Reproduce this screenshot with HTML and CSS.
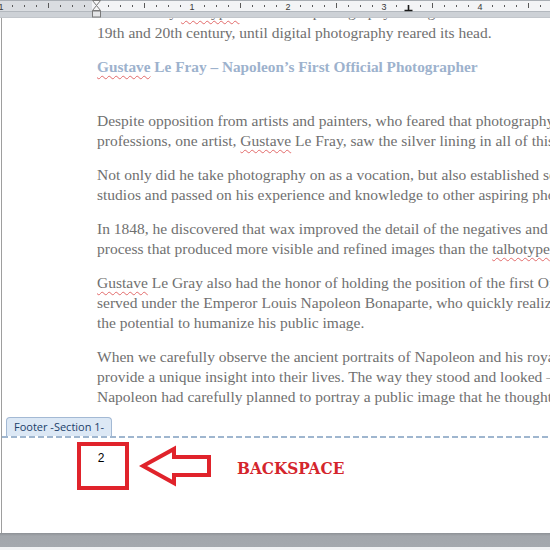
FILE: index.html
```html
<!DOCTYPE html>
<html>
<head>
<meta charset="utf-8">
<link rel="stylesheet" href="styles.css">
</head>
<body>
<div class="screen">
  <div class="ruler">
    <svg width="550" height="18" viewBox="0 0 550 18">
      <rect x="0" y="0" width="550" height="18" fill="#cdd1d6"/>
      <rect x="0" y="0" width="550" height="1" fill="#a9aeb4"/>
      <rect x="0" y="1" width="92" height="10" fill="#dadde1"/>
      <rect x="92" y="1" width="458" height="10" fill="#f3f4f6"/>
      <rect x="0" y="11" width="550" height="1" fill="#b3b8be"/>
      <rect x="0" y="17" width="550" height="1" fill="#c2c6cb"/>
      <g fill="#5a5a5a">
        <rect x="12" y="5" width="1" height="2"/><rect x="24" y="5" width="1" height="2"/><rect x="36" y="5" width="1" height="2"/>
        <rect x="48" y="3" width="1" height="5"/>
        <rect x="60" y="5" width="1" height="2"/><rect x="72" y="5" width="1" height="2"/><rect x="84" y="5" width="1" height="2"/>
        <rect x="108" y="5" width="1" height="2"/><rect x="120" y="5" width="1" height="2"/><rect x="132" y="5" width="1" height="2"/>
        <rect x="144" y="3" width="1" height="5"/>
        <rect x="156" y="5" width="1" height="2"/><rect x="168" y="5" width="1" height="2"/><rect x="180" y="5" width="1" height="2"/>
        <rect x="204" y="5" width="1" height="2"/><rect x="216" y="5" width="1" height="2"/><rect x="228" y="5" width="1" height="2"/>
        <rect x="240" y="3" width="1" height="5"/>
        <rect x="252" y="5" width="1" height="2"/><rect x="264" y="5" width="1" height="2"/><rect x="276" y="5" width="1" height="2"/>
        <rect x="300" y="5" width="1" height="2"/><rect x="312" y="5" width="1" height="2"/><rect x="324" y="5" width="1" height="2"/>
        <rect x="336" y="3" width="1" height="5"/>
        <rect x="348" y="5" width="1" height="2"/><rect x="360" y="5" width="1" height="2"/><rect x="372" y="5" width="1" height="2"/>
        <rect x="396" y="5" width="1" height="2"/><rect x="420" y="5" width="1" height="2"/>
        <rect x="432" y="3" width="1" height="5"/>
        <rect x="444" y="5" width="1" height="2"/><rect x="456" y="5" width="1" height="2"/><rect x="468" y="5" width="1" height="2"/>
        <rect x="492" y="5" width="1" height="2"/><rect x="504" y="5" width="1" height="2"/><rect x="516" y="5" width="1" height="2"/>
        <rect x="528" y="3" width="1" height="5"/>
        <rect x="540" y="5" width="1" height="2"/>
      </g>
      <g class="ruler-num" fill="#3a3a3a">
        <text x="1" y="9.5" text-anchor="middle">1</text>
        <text x="192" y="9.5" text-anchor="middle">1</text>
        <text x="288" y="9.5" text-anchor="middle">2</text>
        <text x="384" y="9.5" text-anchor="middle">3</text>
        <text x="480" y="9.5" text-anchor="middle">4</text>
      </g>
      <path d="M404.5 10.5 H412.5 M408.5 5 V10.5" stroke="#1a1a1a" stroke-width="1.6" fill="none"/>
      <path d="M92.5 0.5 H100.5 L96.5 5.5 Z" fill="#f6f6f6" stroke="#7a7a7a" stroke-width="1"/>
      <path d="M96.5 5.5 L100.5 10.5 H92.5 Z" fill="#f6f6f6" stroke="#7a7a7a" stroke-width="1"/>
      <rect x="92.5" y="11" width="8" height="6" fill="#e4e5e7" stroke="#7a7a7a" stroke-width="1"/>
    </svg>
  </div>
  <div class="page">
    <div class="body-area">
      <div class="doc">
        <p><span class="cut-line">and the early <span class="sq">calotypes</span> dominated photography throughout the</span>19th and 20th century, until digital photography reared its head.</p>
        <h2 class="heading"><span class="sq">Gustave</span> Le Fray – Napoleon’s First Official Photographer</h2>
        <p>Despite opposition from artists and painters, who feared that photography would end their<br>professions, one artist, <span class="sq">Gustave</span> Le Fray, saw the silver lining in all of this.</p>
        <p>Not only did he take photography on as a vocation, but also established several<br>studios and passed on his experience and knowledge to other aspiring photographers.</p>
        <p>In 1848, he discovered that wax improved the detail of the negatives and created a<br>process that produced more visible and refined images than the <span class="sq">talbotype</span>.</p>
        <p><span class="sq">Gustave</span> Le Gray also had the honor of holding the position of the first Official<br>served under the Emperor Louis Napoleon Bonaparte, who quickly realized<br>the potential to humanize his public image.</p>
        <p>When we carefully observe the ancient portraits of Napoleon and his royal family, they<br>provide a unique insight into their lives. The way they stood and looked – everything<br>Napoleon had carefully planned to portray a public image that he thought was best.</p>
      </div>
      <div class="footer-tab">Footer -Section 1-</div>
    </div>
    <div class="footer-line"></div>
    <div class="footer">
      <div class="num-box"><span class="page-num">2</span></div>
      <svg class="arrow" width="74" height="42" viewBox="0 0 74 42">
        <polygon points="4,21 35,4 35,12 70,12 70,30 35,30 35,38" fill="none" stroke="#e0232b" stroke-width="4" stroke-linejoin="miter"/>
      </svg>
      <span class="backspace">BACKSPACE</span>
    </div>
  </div>
  <div class="gap"></div>
  <div class="next-page"></div>
</div>
</body>
</html>
```
FILE: styles.css
```css
html, body {
  margin: 0;
  padding: 0;
  background: #ffffff;
}
.screen {
  width: 550px;
  height: 550px;
  overflow: hidden;
  display: flex;
  flex-direction: column;
}
.ruler {
  height: 18px;
  flex: none;
}
.ruler svg {
  display: block;
}
.ruler-num {
  font-family: "Liberation Sans", Arial, sans-serif;
  font-size: 9px;
}
.page {
  flex: none;
  height: 515px;
  margin-left: 1px;
  border-left: 1px solid #9e9e9e;
  background: #ffffff;
  display: flex;
  flex-direction: column;
  width: 700px;
}
.body-area {
  position: relative;
  height: 418px;
  overflow: hidden;
  flex: none;
}
.doc {
  padding-left: 95px;
  margin-top: -15px;
  font-family: "Liberation Serif", "Times New Roman", serif;
  font-size: 15.5px;
  line-height: 20px;
  color: #707070;
  white-space: nowrap;
}
.doc p {
  margin: 0 0 14px 0;
}
.cut-line {
  display: block;
  line-height: 17px;
  margin-bottom: 3px;
}
.heading {
  margin: 0 0 34px 0;
  font-size: 15.3px;
  line-height: 20px;
  font-weight: bold;
  color: #9db2cd;
}
.sq {
  text-decoration: underline wavy #e26a6a;
  text-decoration-thickness: 1px;
  text-underline-offset: 3px;
}
.footer-tab {
  position: absolute;
  left: 4px;
  bottom: 0;
  height: 18px;
  padding: 0 7px;
  background: #dce8f5;
  border: 1px solid #a3b9d4;
  border-bottom: none;
  border-radius: 4px 4px 0 0;
  font-family: "Open Sans", "Liberation Sans", sans-serif;
  font-size: 11px;
  line-height: 18px;
  color: #20406a;
}
.footer-line {
  flex: none;
  height: 2px;
  background: repeating-linear-gradient(to right, #9fb6cf 0 6px, transparent 6px 9px);
}
.footer {
  flex: none;
  display: flex;
  align-items: center;
  padding-top: 4px;
  padding-left: 75px;
}
.num-box {
  width: 44px;
  height: 40px;
  border: 4px solid #e0232b;
  display: flex;
  justify-content: center;
  align-items: flex-start;
}
.page-num {
  margin-top: 5px;
  margin-right: 4px;
  font-family: "Liberation Sans", Arial, sans-serif;
  font-size: 12px;
  line-height: 14px;
  color: #000000;
}
.arrow {
  display: block;
  margin-left: 10px;
}
.backspace {
  margin-left: 24px;
  margin-top: 3px;
  font-family: "DejaVu Serif Condensed", "DejaVu Serif", serif;
  font-stretch: condensed;
  font-weight: 900;
  font-size: 17px;
  color: #d4252c;
  letter-spacing: 0;
}
.gap {
  flex: none;
  height: 14px;
  background: linear-gradient(to bottom, #8d9196 0, #a3a7ac 3px, #a5a9ae 100%);
}
.next-page {
  flex: 1;
  background: #f2f3f4;
}
```
